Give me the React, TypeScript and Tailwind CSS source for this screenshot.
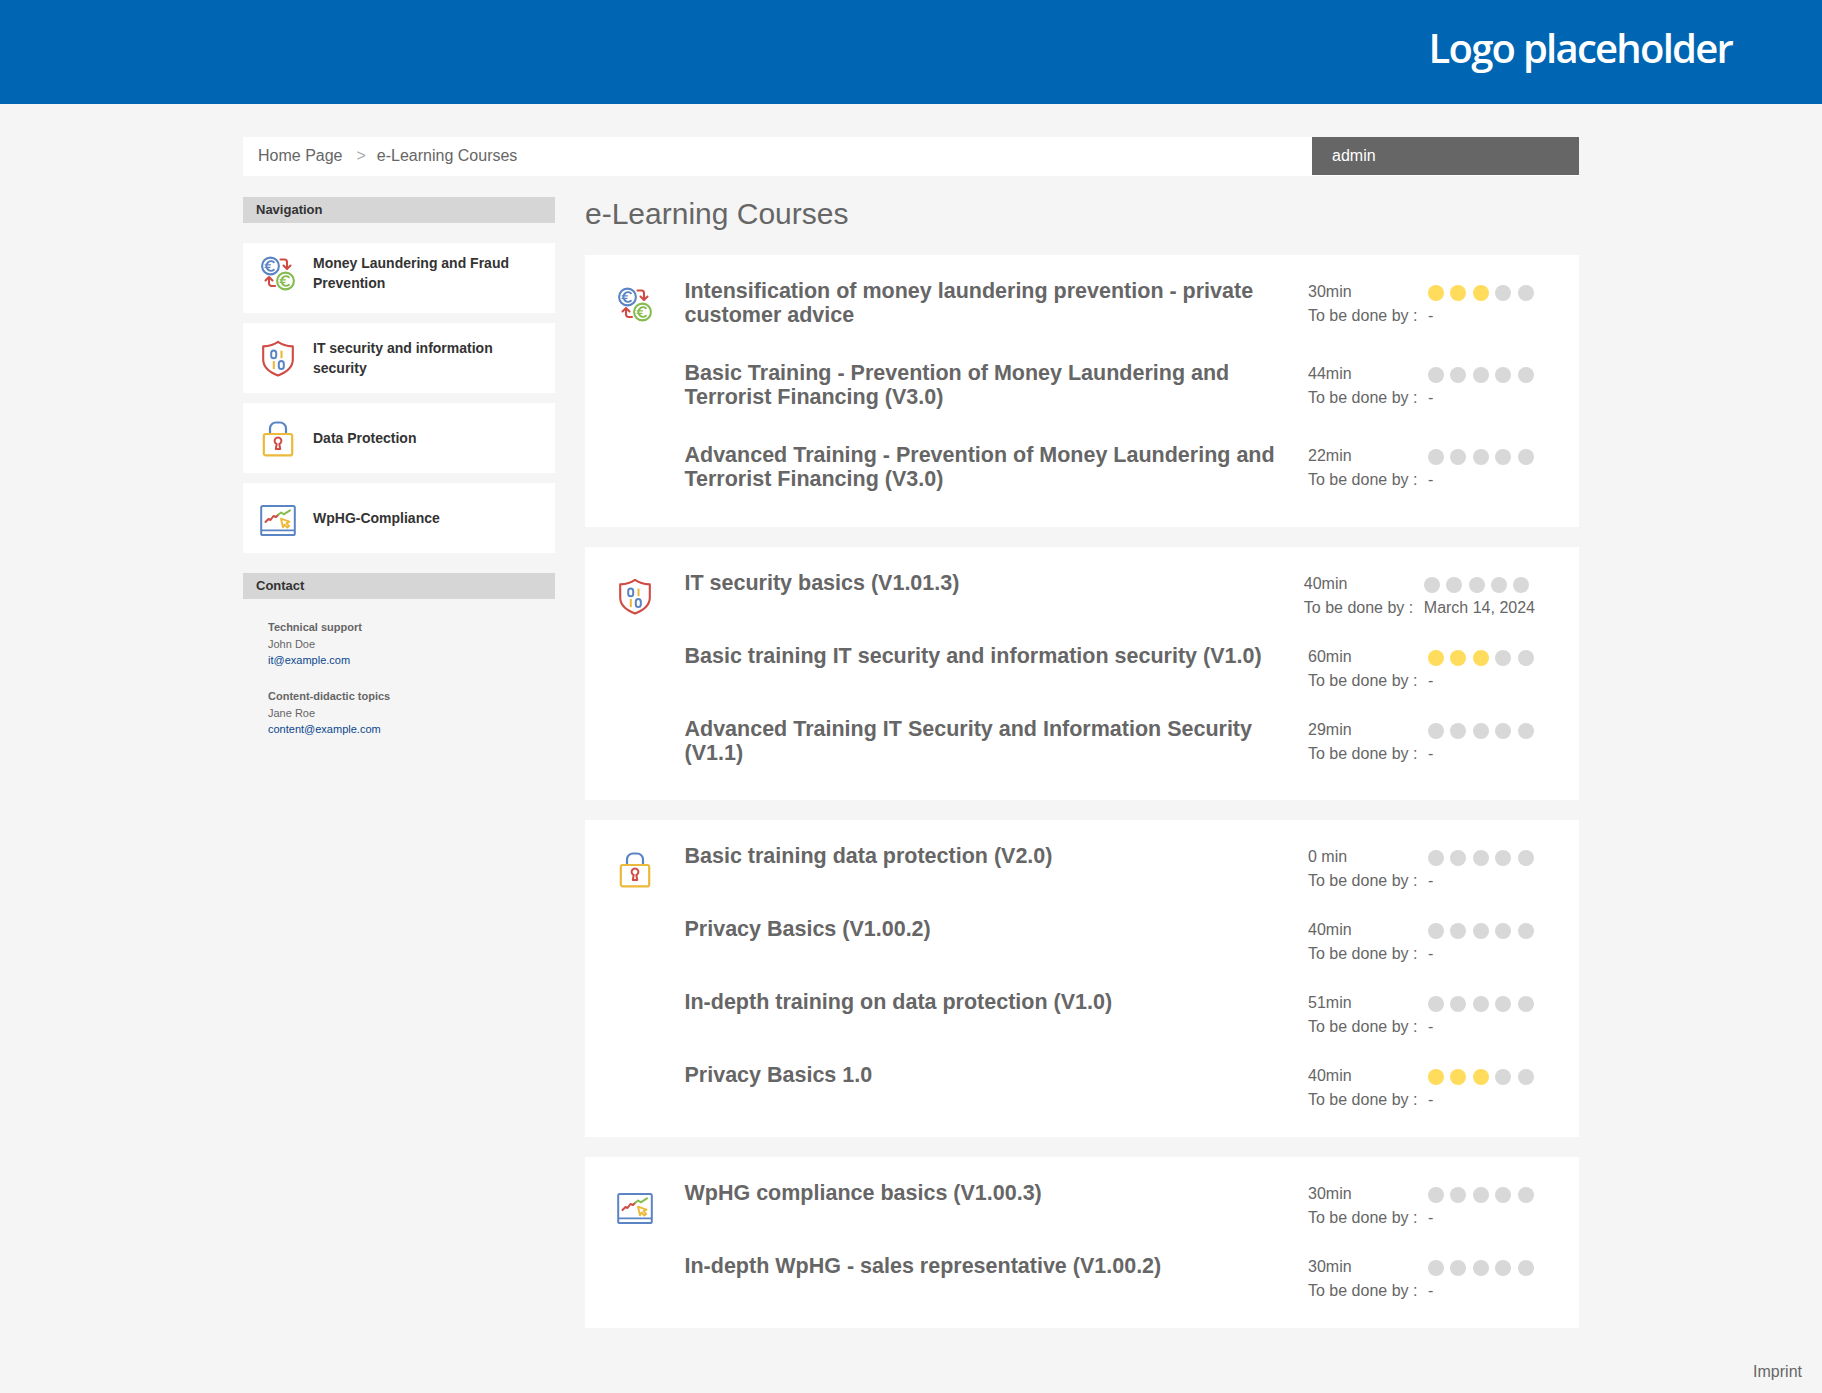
import React from "react";

const blue = "#5b84c4", red = "#cf4b43", green = "#86bc4f", yellow = "#ecb93a";

function EuroGlyph({ cx, cy, c }: { cx: number; cy: number; c: string }) {
  return (
    <g stroke={c} fill="none" strokeLinecap="round">
      <circle cx={cx} cy={cy} r="8.4" strokeWidth="2.1" />
      <path d={`M${cx + 3.4} ${cy - 3.8}a4.6 4.8 0 1 0 0 7.6`} strokeWidth="2" />
      <path d={`M${cx - 5.4} ${cy - 1.2}h5.4M${cx - 5.4} ${cy + 1.4}h4.8`} strokeWidth="1.3" />
    </g>
  );
}

function MoneyIcon() {
  return (
    <svg viewBox="0 0 36 36" className="w-9 h-9 block">
      <EuroGlyph cx={10.5} cy={11} c={blue} />
      <EuroGlyph cx={25.5} cy={26} c={green} />
      <g stroke={red} strokeWidth="2.1" fill="none" strokeLinecap="round" strokeLinejoin="round">
        <path d="M20.5 4.5h4a2.5 2.5 0 0 1 2.5 2.5v6.5" />
        <path d="M23.5 10.5l3.5 3.5 3.5-3.5" />
        <path d="M15 31h-3.5A2.5 2.5 0 0 1 9 28.5V23" />
        <path d="M5.5 25.5L9 22l3.5 3.5" />
      </g>
    </svg>
  );
}

function ShieldIcon() {
  return (
    <svg viewBox="0 0 36 37" className="w-9 h-[37px] block">
      <g transform="translate(0 0.6)">
        <path d="M18 1.2 C13.5 4.5 9 5.4 3.2 5.8 V19 C3.2 26.5 10 32 18 35 C26 32 32.8 26.5 32.8 19 V5.8 C27 5.4 22.5 4.5 18 1.2Z" fill="none" stroke={red} strokeWidth="2.1" strokeLinejoin="round" />
        <rect x="11.2" y="10" width="5" height="7.6" rx="2.5" fill="none" stroke={blue} strokeWidth="2" />
        <path d="M21.5 10v7.6" stroke={yellow} strokeWidth="2.1" />
        <path d="M13.8 20.5v8" stroke={yellow} strokeWidth="2.1" />
        <rect x="18.8" y="20.5" width="5" height="8" rx="2.5" fill="none" stroke={blue} strokeWidth="2" />
      </g>
    </svg>
  );
}

function LockIcon() {
  return (
    <svg viewBox="0 0 36 37" className="w-9 h-[37px] block">
      <g transform="translate(0 1)">
        <path d="M10 13.5V7.5a6 6 0 0 1 6-6h4a6 6 0 0 1 6 6v6" fill="none" stroke={blue} strokeWidth="2.2" />
        <rect x="3.8" y="13" width="28.4" height="21.4" rx="2" fill="none" stroke={yellow} strokeWidth="2.2" />
        <path d="M15.8 28h4.4l-0.9-5a3.4 3.4 0 1 0-2.6 0z" fill="none" stroke={red} strokeWidth="2" strokeLinejoin="round" />
      </g>
    </svg>
  );
}

function ChartIcon() {
  return (
    <svg viewBox="0 0 36 36" className="w-9 h-9 block">
      <rect x="1.2" y="6" width="33.6" height="29" rx="1.6" fill="none" stroke={blue} strokeWidth="2" />
      <path d="M1.2 30.3h33.6" stroke={blue} strokeWidth="1.8" />
      <path d="M5.5 22l3-3 2 1 3-4 2.5 1 2.2-2.3" fill="none" stroke={red} strokeWidth="2" strokeLinejoin="round" strokeLinecap="round" />
      <path d="M18.2 14.7l3-2.2 2.5 1.8 6.3-4" fill="none" stroke={green} strokeWidth="2" strokeLinejoin="round" strokeLinecap="round" />
      <path d="M21 18.7l8.5 3-3 1.4 2.6 3-1.8 1.5-2.8-3-1.5 2.6z" fill="none" stroke={yellow} strokeWidth="1.9" strokeLinejoin="round" />
    </svg>
  );
}

type Course = { t: string; d: string; due?: string; p?: number };
const groups: { icon: React.ReactNode; items: Course[] }[] = [
  {
    icon: <MoneyIcon />,
    items: [
      { t: "Intensification of money laundering prevention - private customer advice", d: "30min", p: 3 },
      { t: "Basic Training - Prevention of Money Laundering and Terrorist Financing (V3.0)", d: "44min" },
      { t: "Advanced Training - Prevention of Money Laundering and Terrorist Financing (V3.0)", d: "22min" },
    ],
  },
  {
    icon: <ShieldIcon />,
    items: [
      { t: "IT security basics (V1.01.3)", d: "40min", due: "March 14, 2024" },
      { t: "Basic training IT security and information security (V1.0)", d: "60min", p: 3 },
      { t: "Advanced Training IT Security and Information Security (V1.1)", d: "29min" },
    ],
  },
  {
    icon: <LockIcon />,
    items: [
      { t: "Basic training data protection (V2.0)", d: "0 min" },
      { t: "Privacy Basics (V1.00.2)", d: "40min" },
      { t: "In-depth training on data protection (V1.0)", d: "51min" },
      { t: "Privacy Basics 1.0", d: "40min", p: 3 },
    ],
  },
  {
    icon: <ChartIcon />,
    items: [
      { t: "WpHG compliance basics (V1.00.3)", d: "30min" },
      { t: "In-depth WpHG - sales representative (V1.00.2)", d: "30min" },
    ],
  },
];

function Dots({ n = 0 }: { n?: number }) {
  return (
    <div className="flex gap-[6.4px] h-6 items-center pt-[2px]">
      {[0, 1, 2, 3, 4].map((i) => (
        <span key={i} className={i < n ? "w-4 h-4 rounded-full bg-[#ffdc5c]" : "w-4 h-4 rounded-full bg-[#d8d8d8]"} />
      ))}
    </div>
  );
}

function Row({ c }: { c: Course }) {
  return (
    <div className="flex justify-between">
      <h3 className="w-[610px] pt-[1px] pb-[33.6px] text-[21.5px] leading-[23.7px] font-bold text-[#666666]">{c.t}</h3>
      <div className="flex gap-[10px] pt-[1px] pb-[24px] text-[16px] leading-[24px] text-[#666666] whitespace-nowrap">
        <div className="min-w-[110px]">
          <div>{c.d}</div>
          <div>To be done by :</div>
        </div>
        <div className="min-w-[107px]">
          <Dots n={c.p} />
          <div>{c.due ?? "-"}</div>
        </div>
      </div>
    </div>
  );
}

const nav = [
  { icon: <MoneyIcon />, t: "Money Laundering and Fraud Prevention", extra: "pb-[10px]" },
  { icon: <ShieldIcon />, t: "IT security and information security", extra: "" },
  { icon: <LockIcon />, t: "Data Protection", extra: "" },
  { icon: <ChartIcon />, t: "WpHG-Compliance", extra: "" },
];

export default function App() {
  return (
    <div className="min-h-[1393px] bg-[#f5f5f5] text-[#666666] font-['Liberation_Sans',Arial,sans-serif]">
      <header className="h-[104px] bg-[#0066b3] flex items-center justify-end pr-[90px]">
        <span className="font-['Open_Sans',sans-serif] font-semibold text-[40px] tracking-[-1.75px] leading-none text-white pb-[8px]">Logo placeholder</span>
      </header>

      <div className="mx-auto w-[1336px]">
        <div className="mt-[33px] h-[39px] bg-white flex justify-between text-[16px]">
          <div className="flex items-center pl-[15px] pb-[1px]">
            <span>Home Page</span>
            <span className="ml-[14px] text-[#aaaaaa]">&gt;</span>
            <span className="ml-[11px]">e-Learning Courses</span>
          </div>
          <div className="w-[267px] bg-[#666666] text-white flex items-center pl-5 h-[38px]">admin</div>
        </div>

        <div className="flex gap-[30px] mt-[21px]">
          <aside className="w-[312px] shrink-0">
            <h4 className="h-[26px] bg-[#d6d6d6] pl-[13px] text-[13px] leading-[26px] font-bold text-[#333333]">Navigation</h4>
            <div className="mt-5 flex flex-col gap-[10px]">
              {nav.map((n) => (
                <a key={n.t} className={`h-[70px] bg-white flex items-center pl-[17px] pr-8 gap-[17px] ${n.extra}`}>
                  <span className="shrink-0">{n.icon}</span>
                  <span className="text-[14px] leading-[20px] font-bold text-[#333333]">{n.t}</span>
                </a>
              ))}
            </div>
            <h4 className="mt-5 h-[26px] bg-[#d6d6d6] pl-[13px] text-[13px] leading-[26px] font-bold text-[#333333]">Contact</h4>
            <div className="pl-[25px] pt-[20px] text-[11px] leading-[16.6px]">
              <div className="font-bold">Technical support</div>
              <div>John Doe</div>
              <div className="text-[#0a478f]">it@example.com</div>
              <div className="font-bold mt-[19.5px]">Content-didactic topics</div>
              <div>Jane Roe</div>
              <div className="text-[#0a478f]">content@example.com</div>
            </div>
          </aside>

          <main className="flex-1 min-w-0">
            <h1 className="text-[30px] leading-[34px] font-normal text-[#666666]">e-Learning Courses</h1>
            <div className="mt-[24px] flex flex-col gap-5">
              {groups.map((g, i) => (
                <section key={i} className={i === 0 ? "bg-white flex pl-[32px] pr-[44px] pt-[24px] pb-[2px]" : "bg-white flex pl-[32px] pr-[44px] pt-[24px] pb-[1px]"}>
                  <div className="w-9 shrink-0 mt-[7px]">{g.icon}</div>
                  <div className="ml-[31.5px] flex-1 min-w-0">
                    {g.items.map((c) => (
                      <Row key={c.t} c={c} />
                    ))}
                  </div>
                </section>
              ))}
            </div>
          </main>
        </div>
      </div>

      <footer className="mt-[32px] pr-5 text-right text-[16px] leading-[24px]">Imprint</footer>
    </div>
  );
}
